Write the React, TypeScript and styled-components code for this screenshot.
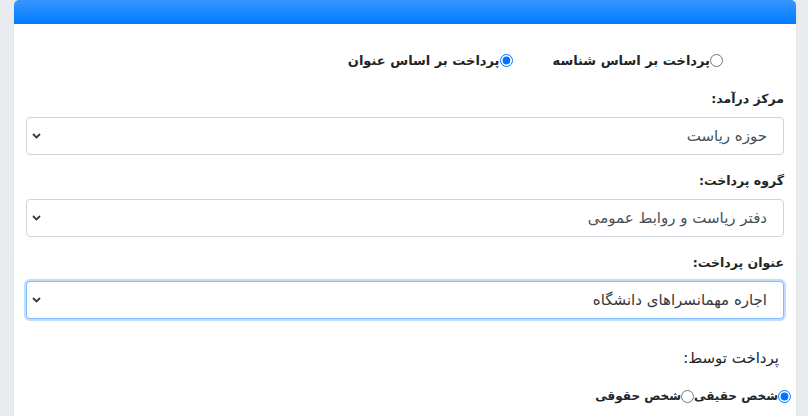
import React from "react";
import styled, { createGlobalStyle } from "styled-components";

const GlobalStyle = createGlobalStyle`
  body {
    margin: 0;
    background: #e9ecef;
    font-family: Tahoma, "DejaVu Sans", sans-serif;
    direction: rtl;
  }
`;

const Page = styled.div`
  padding: 0 11px 0 13px;
  height: 416px;
  overflow: hidden;
`;

const Card = styled.div`
  background: #fff;
  border: 1px solid rgba(0, 0, 0, 0.1);
  border-top: none;
  border-radius: 5px 5px 0 0;
  min-height: 416px;
`;

const CardHeader = styled.div`
  height: 24px;
  border-radius: 5px 5px 0 0;
  background: linear-gradient(#3797ff, #007bff);
`;

const CardBody = styled.div`
  padding: 29px 12px 0 12px;
`;

const RadioRow = styled.div<{ $indent?: number; $gap?: number; $size?: number }>`
  display: flex;
  align-items: center;
  gap: ${(p) => p.$gap ?? 40}px;
  margin-right: ${(p) => p.$indent ?? 0}px;
  font-size: ${(p) => p.$size ?? 13}px;
`;

const RadioLabel = styled.label`
  display: flex;
  align-items: center;
  font-weight: bold;
  color: #212529;
  input {
    margin: 0;
    width: 13px;
    height: 13px;
  }
`;

const FieldGroup = styled.div`
  margin-top: 18px;
  &:first-of-type {
    margin-top: 23px;
  }
`;

const FieldLabel = styled.div`
  font-size: 12.5px;
  font-weight: bold;
  color: #212529;
  margin-bottom: 11px;
`;

const SelectWrap = styled.div`
  position: relative;
`;

const Select = styled.select<{ $focused?: boolean }>`
  appearance: none;
  width: 100%;
  height: 38px;
  padding: 0 16px;
  font-family: inherit;
  font-size: 15px;
  color: ${(p) => (p.$focused ? "#343a40" : "#495057")};
  background: #fff;
  border: 1px solid ${(p) => (p.$focused ? "#80bdff" : "#ced4da")};
  border-radius: 4px;
  box-shadow: ${(p) => (p.$focused ? "0 0 0 2px rgba(0,123,255,0.25)" : "none")};
  outline: none;
`;

const Chevron = styled.svg`
  position: absolute;
  left: 6px;
  top: 16px;
  pointer-events: none;
`;

const SectionTitle = styled.div`
  font-size: 15px;
  color: #212529;
  padding-right: 5px;
  margin-top: 30px;
  margin-bottom: 22px;
`;

function Dropdown({ value, focused }: { value: string; focused?: boolean }) {
  return (
    <SelectWrap>
      <Select $focused={focused} defaultValue={value}>
        <option>{value}</option>
      </Select>
      <Chevron width="9" height="6" viewBox="0 0 9 6">
        <path d="M1 1l3.5 3.5L8 1" fill="none" stroke="#343a40" strokeWidth="1.8" />
      </Chevron>
    </SelectWrap>
  );
}

export default function App() {
  return (
    <>
      <GlobalStyle />
      <Page>
        <Card>
          <CardHeader />
          <CardBody>
            <RadioRow $indent={61}>
              <RadioLabel>
                <input type="radio" name="mode" />
                پرداخت بر اساس شناسه
              </RadioLabel>
              <RadioLabel>
                <input type="radio" name="mode" defaultChecked />
                پرداخت بر اساس عنوان
              </RadioLabel>
            </RadioRow>

            <div>
              <FieldGroup>
                <FieldLabel>مرکز درآمد:</FieldLabel>
                <Dropdown value="حوزه ریاست" />
              </FieldGroup>
              <FieldGroup>
                <FieldLabel>گروه پرداخت:</FieldLabel>
                <Dropdown value="دفتر ریاست و روابط عمومی" />
              </FieldGroup>
              <FieldGroup>
                <FieldLabel>عنوان پرداخت:</FieldLabel>
                <Dropdown value="اجاره مهمانسراهای دانشگاه" focused />
              </FieldGroup>
            </div>

            <SectionTitle>پرداخت توسط:</SectionTitle>
            <RadioRow $gap={0} $indent={-7} $size={12}>
              <RadioLabel>
                <input type="radio" name="payer" defaultChecked />
                شخص حقیقی
              </RadioLabel>
              <RadioLabel>
                <input type="radio" name="payer" />
                شخص حقوقی
              </RadioLabel>
            </RadioRow>
          </CardBody>
        </Card>
      </Page>
    </>
  );
}
